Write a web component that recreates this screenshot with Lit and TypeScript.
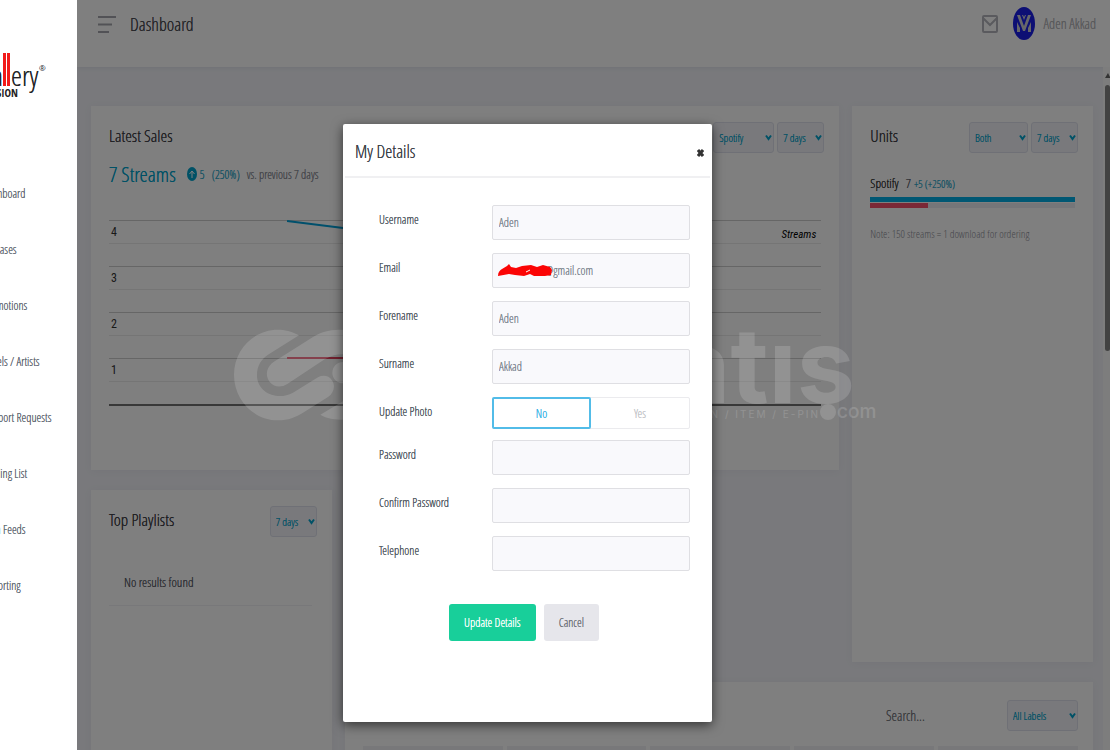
import { LitElement, html, css } from "lit";
import { customElement, property, state } from "lit/decorators.js";

const shared = css`
  * {
    box-sizing: border-box;
  }
  h1,
  h2,
  p {
    margin: 0;
    font-weight: 400;
  }
  button,
  input,
  select {
    font: inherit;
    color: inherit;
    text-shadow: inherit;
  }
`;

@customElement("pick-list")
class PickList extends LitElement {
  @property({ type: Array }) options: string[] = [];
  @property() name = "";

  static styles = [
    shared,
    css`
      :host {
        display: grid;
      }
      select,
      svg {
        grid-area: 1 / 1;
      }
      select {
        appearance: none;
        width: 100%;
        height: 31px;
        padding: 0 10px 0 5px;
        border: 1px solid #dfe1ec;
        border-radius: 3px;
        background: #f2f3f9;
        color: #00a3cc;
        font-size: 11px;
      }
      svg {
        place-self: center end;
        margin-right: 2px;
        width: 7px;
        height: 7px;
        fill: none;
        stroke: #00a3cc;
        stroke-width: 2;
        pointer-events: none;
      }
    `,
  ];

  render() {
    return html`
      <select aria-label=${this.name}>
        ${this.options.map((o) => html`<option>${o}</option>`)}
      </select>
      <svg viewBox="0 0 7 7"><path d="M1 1.5 3.5 5 6 1.5" /></svg>
    `;
  }
}

@customElement("side-menu")
class SideMenu extends LitElement {
  static styles = [
    shared,
    css`
      :host {
        display: block;
        height: 100vh;
        overflow: hidden;
        background: #fff;
        color: #5d6670;
        font-size: 12px;
      }
      .logo {
        display: block;
        width: 77px;
        height: 56px;
        margin-top: 48px;
      }
      .word {
        font-size: 28px;
        fill: #222;
      }
      .sub {
        font-family: "Open Sans Condensed", sans-serif;
        font-size: 11px;
        text-shadow: none;
        fill: #222;
      }
      .reg {
        font-size: 8px;
        fill: #444;
      }
      nav {
        display: grid;
        margin: 62px 0 0 -17px;
      }
      a {
        line-height: 56px;
        color: inherit;
        text-decoration: none;
        white-space: nowrap;
      }
    `,
  ];

  links = [
    "Dashboard",
    "Releases",
    "Promotions",
    "Labels / Artists",
    "Support Requests",
    "Mailing List",
    "Data Feeds",
    "Reporting",
  ];

  render() {
    return html`
      <svg class="logo" viewBox="0 0 77 56">
        <text class="word" x="3" y="38" text-anchor="end">ga</text>
        <path d="M3 5h3v33H3zM7 5h3v33H7z" fill="#f21a1a" />
        <text class="word" x="11" y="38">ery</text>
        <text class="sub" x="18" y="49" text-anchor="end">VISION</text>
        <text class="reg" x="39" y="23">®</text>
      </svg>
      <nav>${this.links.map((l) => html`<a href="#">${l}</a>`)}</nav>
    `;
  }
}

@customElement("details-dialog")
class DetailsDialog extends LitElement {
  @state() photo = "No";

  static styles = [
    shared,
    css`
      :host {
        display: block;
        min-height: 598px;
        background: #fff;
        border-radius: 2px;
        box-shadow: 0 3px 12px rgba(0, 0, 0, 0.6);
        color: #4b535c;
        font-size: 12px;
      }
      header {
        display: flex;
        justify-content: space-between;
        align-items: center;
        height: 54px;
        margin: 0 2px;
        padding: 2px 4px 0 10px;
        border-bottom: 2px solid #f0f0f2;
      }
      h2 {
        font-size: 18px;
        color: #3c4148;
      }
      .close {
        display: grid;
        padding: 4px 2px 0;
        border: 0;
        background: none;
        color: #333;
      }
      .close svg {
        width: 7px;
        height: 8px;
        stroke: currentColor;
        stroke-width: 3;
      }
      form {
        padding: 27px 22px 0 36px;
      }
      .row {
        display: grid;
        grid-template-columns: 113px 1fr;
        align-items: start;
        margin-bottom: 13px;
      }
      .row.photo {
        margin-bottom: 11px;
      }
      .row > label,
      .row > span {
        line-height: 30px;
      }
      .field {
        display: grid;
      }
      .field > * {
        grid-area: 1 / 1;
      }
      .text {
        width: 100%;
        height: 35px;
        padding: 0 6px;
        border: 1px solid #dfdfe3;
        border-radius: 2px;
        background: #f9f9fc;
        color: #7d8690;
      }
      .mail {
        padding-left: 53px;
      }
      .scribble {
        place-self: center start;
        margin-left: 5px;
        width: 56px;
        height: 16px;
      }
      .choice {
        display: grid;
        grid-template-columns: 1fr 1fr;
        height: 32px;
        border: 1px solid #ebebee;
        border-radius: 2px;
      }
      .choice label {
        display: grid;
        place-items: center;
        margin: -1px 0;
        color: #c3c5c9;
      }
      .choice .on {
        border: 2px solid #52bce8;
        border-radius: 2px;
        margin-left: -1px;
        color: #36b3e6;
      }
      .choice input {
        position: absolute;
        opacity: 0;
      }
      .actions {
        display: flex;
        gap: 8px;
        margin: 33px 0 0 70px;
      }
      .actions button {
        height: 37px;
        padding: 0 15px;
        border: 0;
        border-radius: 3px;
        background: #e6e6eb;
        color: #6b6f76;
      }
      .actions .primary {
        background: #18cf9a;
        color: #fff;
      }
    `,
  ];

  field(id: string, label: string, value = "", type = "text") {
    return html`<div class="row">
      <label for=${id}>${label}</label>
      <input class="text" id=${id} type=${type} .value=${value} />
    </div>`;
  }

  render() {
    return html`
      <header>
        <h2>My Details</h2>
        <button class="close" aria-label="Close">
          <svg viewBox="0 0 7 8"><path d="M1 1 6 7M6 1 1 7" /></svg>
        </button>
      </header>
      <form>
        ${this.field("user", "Username", "Aden")}
        <div class="row">
          <label for="mail">Email</label>
          <div class="field">
            <input class="text mail" id="mail" .value=${"@gmail.com"} />
            <svg class="scribble" viewBox="0 0 56 16">
              <path
                fill="#fb0505"
                d="M1 13C1 9 3 7 5 6L10 3 12 1 14 4 19 5 25 3 34 2 40 4 46 2 53 4 55 7 54 12 48 13 37 13 33 11 27 13 18 12 12 11Z"
              />
              <path d="M29 9 33 7" stroke="#fff" />
            </svg>
          </div>
        </div>
        ${this.field("fore", "Forename", "Aden")}
        ${this.field("sur", "Surname", "Akkad")}
        <div class="row photo">
          <span>Update Photo</span>
          <div class="choice">
            ${["No", "Yes"].map(
              (c) => html`<label class=${this.photo === c ? "on" : ""}>
                <input
                  type="radio"
                  name="photo"
                  .checked=${this.photo === c}
                  @change=${() => (this.photo = c)}
                />${c}
              </label>`
            )}
          </div>
        </div>
        ${this.field("pass", "Password", "", "password")}
        ${this.field("again", "Confirm Password", "", "password")}
        ${this.field("tel", "Telephone", "", "tel")}
        <div class="actions">
          <button class="primary" type="button">Update Details</button>
          <button type="button">Cancel</button>
        </div>
      </form>
    `;
  }
}

@customElement("app-root")
class AppRoot extends LitElement {
  static styles = [
    shared,
    css`
      :host {
        display: grid;
        grid-template-columns: 77px minmax(0, 1fr);
        height: 100vh;
        overflow: hidden;
        font-family: "Open Sans Condensed Light", "Open Sans Condensed",
          "Open Sans", sans-serif;
        font-size: 13px;
        text-shadow: 0 0 0 currentColor;
        color: #5c606a;
      }
      .main {
        position: relative;
        height: 100vh;
        overflow: hidden;
        display: grid;
        grid-template-rows: 67px minmax(0, 1fr);
        background: #f2f3f8;
      }
      .top {
        display: flex;
        align-items: center;
        padding: 0 14px 20px 21px;
        background: #fff;
        box-shadow: 0 1px 4px rgba(80, 80, 120, 0.1);
      }
      .burger {
        display: grid;
        padding: 0;
        border: 0;
        background: none;
      }
      .burger svg {
        width: 18px;
        height: 18px;
        stroke: #a4a5ac;
        stroke-width: 2;
      }
      h1 {
        margin-left: 14px;
        font-size: 18px;
        color: #4a4b52;
      }
      .mail {
        width: 16px;
        height: 20px;
        margin-left: auto;
        fill: none;
        stroke: #b4b5bc;
        stroke-width: 2;
      }
      .avatar {
        width: 22px;
        height: 33px;
        margin: 0 9px 0 15px;
      }
      .user {
        font-size: 14px;
        color: #b2b3b8;
      }
      .body {
        display: grid;
        grid-template-columns: minmax(0, 1fr) 7px;
      }
      .cards {
        display: grid;
        grid-template-columns: repeat(4, minmax(0, 1fr));
        grid-template-rows: 364px 172px 300px;
        gap: 20px 13px;
        padding: 39px 10px 0 14px;
        overflow: hidden;
      }
      .card {
        padding: 16px 15px 0 18px;
        background: #fff;
        box-shadow: 0 1px 8px rgba(80, 80, 130, 0.06);
      }
      .sales {
        grid-column: 1 / 4;
      }
      .units {
        grid-area: 1 / 4 / 3 / 5;
      }
      .lists {
        grid-area: 2 / 1 / 4 / 2;
      }
      .table {
        grid-area: 3 / 2 / 4 / 5;
      }
      .head {
        display: flex;
        gap: 3px;
        height: 31px;
      }
      .head h2 {
        margin-right: auto;
        font-size: 17px;
        line-height: 28px;
        color: #3f4047;
      }
      .w-l {
        width: 61px;
      }
      .w-m {
        width: 59px;
      }
      .w-s {
        width: 47px;
      }
      .w-x {
        width: 71px;
      }
      .sum {
        display: flex;
        align-items: center;
        gap: 7px;
        height: 42px;
        font-size: 12px;
        color: #8b8d96;
      }
      .sum strong {
        margin-right: 4px;
        font-size: 21px;
        font-weight: 400;
        color: #00a3cc;
      }
      .sum svg {
        width: 10px;
        height: 14px;
        margin-right: -4px;
      }
      .cyan {
        color: #2aa5c8;
      }
      .chart {
        position: relative;
        margin: 25px 3px 0 0;
        border-bottom: 2px solid #707070;
        color: #333;
        font: 12px "Roboto Condensed", "Liberation Sans", sans-serif;
        text-shadow: none;
      }
      .band {
        display: grid;
        grid-template-rows: 1fr 1fr;
        height: 46px;
        border-top: 1px solid #ccc;
      }
      .band div {
        padding: 0 2px;
        line-height: 22px;
        border-bottom: 1px solid #ebebeb;
      }
      .chart svg {
        position: absolute;
        inset: 0;
        width: 100%;
        height: 184px;
      }
      .chart em {
        position: absolute;
        right: 5px;
        top: 8px;
        font-size: 11px;
        color: #000;
      }
      .unit {
        display: flex;
        align-items: baseline;
        gap: 7px;
        margin-top: 20px;
        line-height: 20px;
      }
      .unit b {
        font-weight: 400;
        font-size: 13px;
        color: #333;
      }
      .unit .cyan {
        font-size: 11px;
        margin-left: -4px;
      }
      .bar {
        height: 5px;
        margin-right: 3px;
      }
      .bar div {
        height: 100%;
      }
      .now {
        margin-top: 3px;
        background: #00aee6;
      }
      .old {
        margin-top: 1px;
        background: #ebecf3;
      }
      .old div {
        background: #f4516c;
      }
      .note {
        margin-top: 17px;
        font-size: 11px;
        line-height: 18px;
        color: #8b8d96;
        text-shadow: none;
      }
      .none {
        margin: 34px 5px 0 0;
        padding: 0 15px 12px;
        border-bottom: 1px solid #f0f0f4;
        font-size: 13px;
        line-height: 22px;
      }
      .search {
        width: 118px;
        padding: 0;
        border: 0;
        background: none;
        font-size: 14px;
      }
      .search::placeholder {
        color: #77797f;
      }
      .table .head {
        justify-content: flex-end;
        margin-top: 2px;
      }
      .cols {
        display: grid;
        grid-template-columns: repeat(5, 1fr);
        gap: 4px;
        margin-top: 15px;
      }
      .cols div {
        height: 30px;
        background: #f1f1f5;
      }
      .scroll {
        padding-top: 4px;
        background: #fafafa;
      }
      .scroll svg {
        display: block;
        width: 7px;
        height: 14px;
      }
      .thumb {
        height: 266px;
        margin-left: 2px;
        border-radius: 3px;
        background: #858585;
      }
      .shade {
        position: absolute;
        inset: 0;
        background: rgba(0, 0, 0, 0.5);
      }
      .mark {
        position: absolute;
        left: 151px;
        top: 322px;
        width: 650px;
        height: 104px;
        fill: #fff;
        opacity: 0.15;
        text-shadow: none;
        font-family: Inter, sans-serif;
      }
      .big {
        font-size: 104px;
        font-weight: 700;
      }
      .tag {
        font-size: 10px;
        letter-spacing: 2px;
      }
      .com {
        font-size: 19px;
        font-weight: 500;
      }
      .holder {
        position: absolute;
        inset: 0;
        display: grid;
        grid-template-columns: 369px;
        place-content: start;
        padding: 124px 0 0 266px;
      }
    `,
  ];

  select(cls: string, name: string, value: string) {
    return html`<pick-list class=${cls} .name=${name} .options=${[value]}></pick-list>`;
  }

  render() {
    return html`
      <side-menu></side-menu>
      <div class="main">
        <header class="top">
          <button class="burger" aria-label="Menu">
            <svg viewBox="0 0 18 18"><path d="M0 2h18M0 9.500h14M0 17h11" /></svg>
          </button>
          <h1>Dashboard</h1>
          <svg class="mail" viewBox="0 0 16 20">
            <rect x="1" y="2" width="14" height="16" rx="1" />
            <path d="M1 4 8 11 15 4" />
          </svg>
          <svg class="avatar" viewBox="0 0 22 33">
            <ellipse cx="11" cy="16.500" rx="11" ry="16.500" fill="#1a1ee8" />
            <path
              d="M4 8H7L11 19 15 8H18L12 24H10ZM4 15 7 21V25H4ZM18 15 15 21V25H18ZM9 8 11 13 13 8 12 8 11 10 10 8Z"
              fill="#cfcfd4"
            />
          </svg>
          <span class="user">Aden Akkad</span>
        </header>

        <div class="body">
          <div class="cards">
            <section class="card sales">
              <div class="head">
                <h2>Latest Sales</h2>
                ${this.select("w-l", "Store", "Spotify")}
                ${this.select("w-s", "Sales period", "7 days")}
              </div>
              <p class="sum">
                <strong>7 Streams</strong>
                <svg viewBox="0 0 10 14">
                  <ellipse cx="5" cy="7" rx="5" ry="7" fill="#00a3cc" />
                  <path d="M5 11V4M2.500 7 5 4 7.500 7" fill="none" stroke="#fff" />
                </svg>
                <span class="cyan">5</span>
                <span class="cyan">(250%)</span>
                <span>vs. previous 7 days</span>
              </p>
              <div class="chart">
                ${[4, 3, 2, 1].map((n) => html`<div class="band"><div>${n}</div></div>`)}
                <svg viewBox="0 0 712 184" preserveAspectRatio="none">
                  <path d="M178 1 234 8 356 46 534 92" fill="none" stroke="#00a0d8" stroke-width="2" />
                  <path d="M178 138H534" stroke="#e0405c" stroke-width="2" />
                </svg>
                <em>Streams</em>
              </div>
            </section>

            <section class="card units">
              <div class="head">
                <h2>Units</h2>
                ${this.select("w-m", "Unit type", "Both")}
                ${this.select("w-s", "Units period", "7 days")}
              </div>
              <p class="unit">
                <b>Spotify</b><span>7</span><span class="cyan">+5 (+250%)</span>
              </p>
              <div class="bar now"></div>
              <div class="bar old"><div style="width:28%"></div></div>
              <p class="note">Note: 150 streams = 1 download for ordering</p>
            </section>

            <section class="card lists">
              <div class="head">
                <h2>Top Playlists</h2>
                ${this.select("w-s", "Playlist period", "7 days")}
              </div>
              <p class="none">No results found</p>
            </section>

            <section class="card table">
              <div class="head">
                <input class="search" type="search" aria-label="Search" placeholder="Search..." />
                ${this.select("w-x", "Label", "All Labels")}
              </div>
              <div class="cols">${[1, 2, 3, 4, 5].map(() => html`<div></div>`)}</div>
            </section>
          </div>
          <div class="scroll">
            <svg viewBox="0 0 7 14"><path d="M2 7 5 2 7 6V7Z" fill="#666" /></svg>
            <div class="thumb"></div>
          </div>
        </div>

        <div class="shade"></div>
        <svg class="mark" viewBox="0 0 650 104">
          <g transform="scale(.3333)">
            <path
              d="M213 40C190 27 170 23 150 23C77 23 18 83 18 158C18 233 77 295 150 295C180 295 205 285 225 272L300 225C318 213 323 190 312 175C303 161 285 158 270 166L195 212C180 220 165 223 150 222C115 220 87 195 87 160C87 130 100 112 120 98Z"
            />
            <path
              d="M350 24C310 20 280 30 255 45L140 118C115 133 110 160 125 180C140 197 160 197 178 186L290 112C310 100 330 95 350 97Z"
            />
            <circle cx="345" cy="152" r="32" />
            <path d="M277 278 350 235V293C320 293 295 290 277 278Z" />
          </g>
          <text class="big" x="627" y="81" text-anchor="end">atıs</text>
          <circle cx="600" cy="90" r="8" />
          <text class="tag" x="592" y="96" text-anchor="end">N / ITEM / E-PIN</text>
          <text class="com" x="609" y="96">com</text>
        </svg>
        <div class="holder"><details-dialog></details-dialog></div>
      </div>
    `;
  }
}
